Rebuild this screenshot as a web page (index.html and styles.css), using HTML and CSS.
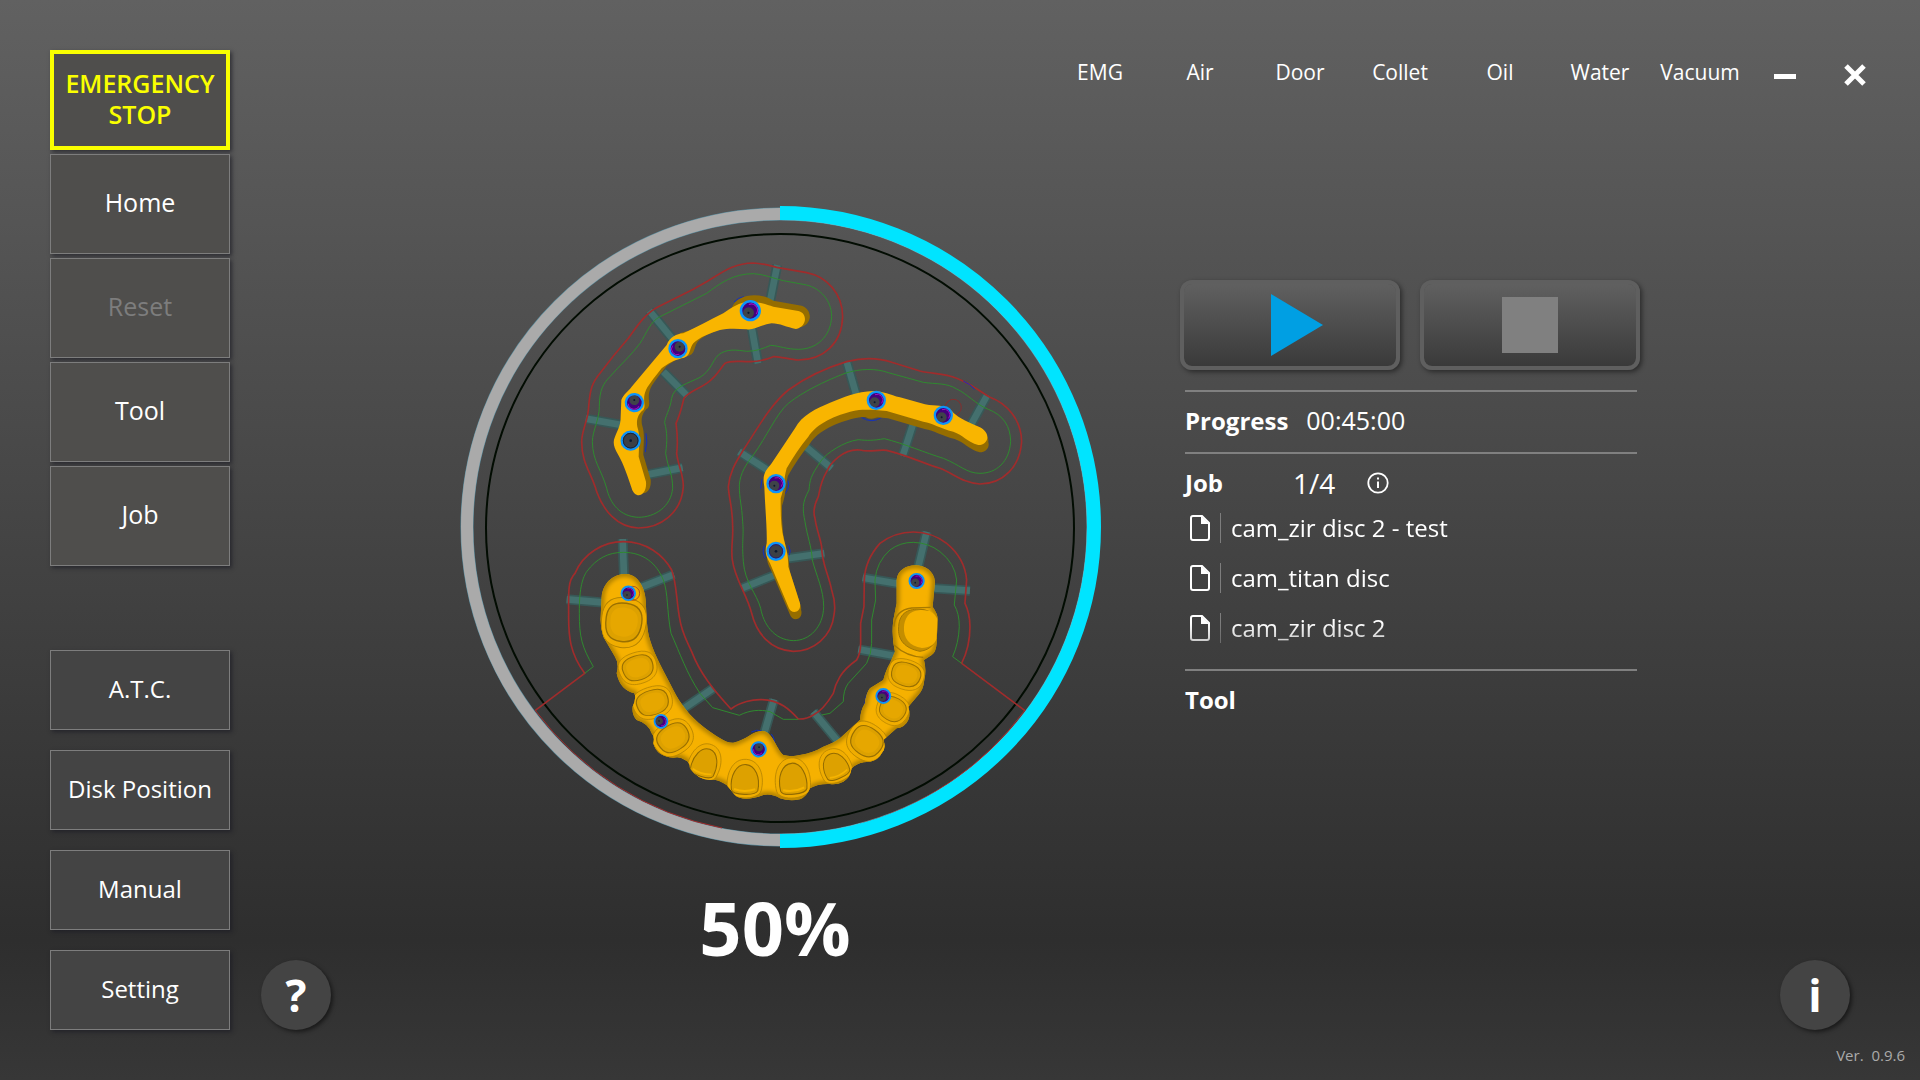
FILE: index.html
```html
<!DOCTYPE html>
<html lang="en">
<head>
<meta charset="utf-8">
<title>Milling Control</title>
<link rel="stylesheet" href="styles.css">
</head>
<body>
<div class="app">
  <nav class="sidebar" aria-label="Machine">
    <div class="group group-top">
      <button class="side-btn emergency" type="button">EMERGENCY STOP</button>
      <button class="side-btn" type="button">Home</button>
      <button class="side-btn" type="button" disabled>Reset</button>
      <button class="side-btn" type="button">Tool</button>
      <button class="side-btn" type="button">Job</button>
    </div>
    <div class="group group-bottom">
      <button class="side-btn" type="button">A.T.C.</button>
      <button class="side-btn" type="button">Disk Position</button>
      <button class="side-btn" type="button">Manual</button>
      <button class="side-btn" type="button">Setting</button>
    </div>
  </nav>

  <div class="main">
    <header class="topbar">
      <ul class="status">
        <li>EMG</li><li>Air</li><li>Door</li><li>Collet</li><li>Oil</li><li>Water</li><li>Vacuum</li>
      </ul>
      <button class="win-btn" type="button" aria-label="Minimize">
        <svg width="24" height="24" viewBox="0 0 24 24"><path d="M1 13.500H23" stroke="#fff" stroke-width="5"/></svg>
      </button>
      <button class="win-btn" type="button" aria-label="Close">
        <svg width="24" height="24" viewBox="0 0 24 24"><path d="M3 3L21 21M21 3L3 21" stroke="#fff" stroke-width="5"/></svg>
      </button>
    </header>

    <main class="content">
      <section class="disc">
        <svg class="disc-view" viewBox="459 206 642 642" role="img" aria-label="Disc preview">
          <defs>
            <g id="hole">
              <circle r="24" fill="#43007c"/>
              <path d="M-4 -17A17 17 0 0 1 16 9" fill="none" stroke="#a010c0" stroke-width="3"/>
              <circle cx="-5" cy="6" r="15" fill="#3f4349"/>
              <circle r="25.500" fill="none" stroke="#0c94fb" stroke-width="7"/>
              <circle cx="-5" cy="6" r="3" fill="#0d1a30"/>
            </g>
            <g id="tooth">
              <path d="M-50 -8C-50 -38 -32 -50 0 -50C34 -50 50 -34 50 -4C50 34 32 50 0 50C-34 50 -50 32 -50 -8Z" fill="#f0ad00" stroke="#b38300" stroke-width="2"/>
              <path d="M-40 -6C-40 -30 -26 -39 0 -39C28 -39 40 -26 40 -4C40 26 26 38 0 38C-28 38 -40 26 -40 -6Z" fill="#dda100" stroke="#9a7000" stroke-width="3"/>
              <path d="M-30 -6C-30 -24 -16 -30 0 -30C20 -30 31 -20 31 -4C31 19 18 28 0 28C-20 28 -30 18 -30 -6Z" fill="#e6a700"/>
            </g>
            <g id="incisor">
              <path d="M-46 28C-54 -10 -38 -50 0 -50C38 -50 54 -10 46 26C40 52 -38 54 -46 28Z" fill="#f0ad00" stroke="#b38300" stroke-width="2"/>
              <path d="M-35 28C-42 -6 -26 -37 0 -37C26 -37 42 -6 37 26C32 40 -30 42 -35 28Z" fill="#dda100" stroke="#936b00" stroke-width="3"/>
              <path d="M-28 26Q0 34 30 23" fill="none" stroke="#f6b400" stroke-width="5"/>
            </g>
            <path id="barA" d="M215 745C205 715 190 670 175 645C160 620 158 605 165 590C175 565 182 555 182 530L184 480C190 462 205 455 215 440L320 315C330 290 350 282 370 280C410 262 450 240 490 220C510 205 540 185 570 185C600 185 620 195 640 200L715 213C745 220 740 262 708 267C680 262 660 250 635 250C600 255 580 272 560 268C530 265 500 265 480 270C450 280 420 290 400 310C385 330 395 350 365 355C340 362 325 370 305 385C290 405 268 430 258 450C245 480 260 495 250 510C235 520 228 540 232 560C242 590 236 620 236 650L258 725C262 770 225 780 215 745Z"/>
            <path id="barB" d="M205 800L150 670C135 645 135 630 140 610C142 570 135 500 133 440C125 400 140 390 155 370L225 265C245 225 290 205 330 188C370 172 410 155 460 153C490 153 510 165 540 172L615 193C650 200 670 192 695 212C710 230 730 240 780 262C815 280 805 315 775 315C740 305 730 285 700 275C660 265 640 250 610 245L500 213C450 208 420 208 400 213C350 225 290 250 265 290C240 320 220 350 200 385C190 420 195 440 182 475C182 520 182 560 192 600C200 630 205 650 205 680L240 790C245 820 212 825 205 800Z"/>
            <path id="arch" d="M185 200C190 150 230 130 260 132C295 135 315 175 317 210C320 260 320 300 330 330C345 380 375 430 400 480C420 520 450 560 490 590C530 620 560 640 580 638C620 630 640 600 670 603C700 610 705 650 730 675Q755 682 780 675Q820 668 850 650Q880 640 900 625L960 570Q962 540 975 520Q978 490 990 475L1030 450Q1038 420 1050 400L1065 365Q1054 320 1060 270L1070 220V150C1075 90 1180 90 1185 155L1178 230Q1195 255 1193 270L1190 340Q1188 368 1175 375L1152 390Q1160 420 1153 450Q1150 480 1135 495L1105 530Q1112 555 1105 570Q1095 592 1070 595L1030 630Q1040 655 1025 670Q1015 690 990 695Q955 695 935 715Q930 745 910 755Q890 765 870 762Q835 760 810 775Q800 800 780 808Q750 815 720 805Q695 790 670 795Q610 818 585 795L560 765Q530 745 510 750Q475 750 450 715Q450 695 435 690Q420 678 400 683Q350 680 340 640Q345 620 335 610Q325 580 290 570Q275 555 278 530Q290 505 283 490Q240 480 230 430Q238 400 225 380L190 320Q180 290 182 260Z"/>
            <clipPath id="archClip"><use href="#arch"/></clipPath>
            <filter id="soft" x="-10%" y="-10%" width="120%" height="120%"><feGaussianBlur stdDeviation="6"/></filter>
          </defs>

          <circle class="ring-edge" cx="780" cy="527" r="313"/>
          <circle class="ring-rest" cx="780" cy="527" r="313"/>
          <circle class="disc-rim" cx="780" cy="528" r="294"/>
          <path class="limit" d="M535 710A306 306 0 0 0 722 828M860 824A306 306 0 0 0 1025 710"/>
          <path class="ring-done" d="M780 213A314 314 0 0 1 780 841"/>

          <g transform="translate(560 240) scale(.3333)">
            <path class="pin" d="M652 75L630 185M268 212L340 300M594 370L575 262M382 468L310 395M77 536L185 555M368 683L262 704"/>
            <path class="pin-core" d="M652 75L630 185M268 212L340 300M594 370L575 262M382 468L310 395M77 536L185 555M368 683L262 704"/>
            <path class="margin" d="M295 200L400 148L445 122C490 95 520 70 580 69C610 70 630 77 650 82L740 98C800 110 848 160 848 230C846 310 790 360 715 360C690 360 660 348 640 350C620 358 600 366 565 365C540 365 510 360 495 370C480 385 475 405 440 430C410 450 385 455 372 475C365 500 362 520 348 550C352 580 355 600 350 640C355 680 370 700 370 740C365 820 300 864 235 864C170 862 130 810 110 755C95 700 65 670 65 605C65 570 85 540 86 500C90 450 95 430 120 400C150 360 170 335 205 295C230 260 255 220 295 200Z"/>
            <path class="path" d="M300 230L440 160C480 130 520 101 580 101C610 102 640 115 670 122L740 135C780 145 815 180 815 230C812 290 770 328 715 328C680 328 660 318 632 316C610 325 590 334 560 334C530 330 500 325 475 345C455 365 455 390 420 412C385 430 340 440 335 475C330 510 315 530 314 548C322 580 322 600 317 640C325 690 338 700 338 745C333 800 285 832 235 832C180 830 150 790 140 745C125 690 98 665 97 605C98 570 118 540 118 500C118 450 130 430 150 410C180 375 215 345 240 310C260 280 270 245 300 230Z"/>
            <path class="trace" d="M522 186Q535 172 552 170M258 580Q264 605 256 636"/>
            <path class="bar-side" d="M515 205C530 160 600 155 640 182L725 197C760 210 755 250 720 262L600 240Z"/>
            <use class="bar-side" href="#barA" transform="translate(14 -6)"/>
            <use class="bar-top" href="#barA"/>
            <use href="#hole" transform="translate(571 212) scale(1.1)"/>
            <use href="#hole" transform="translate(354 326) rotate(180)"/>
            <use href="#hole" transform="translate(223 488) rotate(140)"/>
            <circle cx="212" cy="602" r="27" fill="#3c4046" stroke="#0c94fb" stroke-width="7"/>
            <circle cx="212" cy="602" r="22" fill="none" stroke="#14243f" stroke-width="3"/>
            <circle cx="212" cy="602" r="4" fill="#0d1a30"/>
          </g>

          <g transform="translate(720 340) scale(.3333)">
            <path class="pin" d="M380 65L410 168M802 165L750 260M548 348L580 250M335 385L255 318M57 335L150 395M313 640L205 655M65 745L165 705"/>
            <path class="pin-core" d="M380 65L410 168M802 165L750 260M548 348L580 250M335 385L255 318M57 335L150 395M313 640L205 655M65 745L165 705"/>
            <path class="margin" d="M25 440C28 400 45 370 70 330C110 270 150 195 205 150C260 110 330 80 380 65C430 52 480 55 515 67L600 93C640 103 670 98 710 115C760 135 780 155 810 172C860 190 905 240 905 305C900 380 850 432 780 432C730 430 700 400 660 385C610 370 560 345 500 331C470 328 450 338 420 330C370 325 330 370 320 395C300 430 300 450 295 470C280 500 280 520 285 535C290 570 300 590 305 620C305 670 325 700 335 750C345 780 345 810 342 825C335 890 280 934 220 934C150 930 110 880 95 820C80 760 45 720 37 660C32 620 40 600 38 560C38 500 27 480 25 440Z"/>
            <path class="path" d="M58 435C60 400 80 370 100 345C140 290 170 220 205 190C250 155 310 125 375 100C420 85 470 85 505 98L610 127C650 133 680 128 710 147C740 160 770 195 805 208C850 225 872 260 872 305C868 365 830 400 780 400C740 400 720 375 670 355C620 340 550 310 493 296C460 302 440 302 415 299C370 305 320 340 305 360C270 410 270 420 267 450C245 490 248 510 255 545C262 590 275 620 277 660C290 710 311 750 311 800C310 860 270 902 220 902C160 900 130 850 122 805C110 760 75 730 70 665C65 600 72 590 68 545C65 490 58 480 58 435Z"/>
            <path class="trace" d="M424 232Q455 252 486 232M204 422Q212 445 190 466M126 418L122 446M132 618Q126 634 134 654M206 616Q214 634 208 646M730 123Q750 132 764 148"/>
            <circle class="trace-red" cx="700" cy="202" r="24"/>
            <path class="bar-side" d="M420 215Q450 255 490 220Z"/>
            <use class="bar-side" href="#barB" transform="translate(4 22)"/>
            <use class="bar-side" href="#barB" transform="translate(3 10)"/>
            <use class="bar-top" href="#barB"/>
            <use href="#hole" transform="translate(469 181)"/>
            <use href="#hole" transform="translate(670 226)"/>
            <use href="#hole" transform="translate(168 431)"/>
            <circle cx="168" cy="634" r="25" fill="#3c4046" stroke="#0c94fb" stroke-width="8"/>
            <circle cx="168" cy="634" r="20" fill="none" stroke="#2a1c70" stroke-width="3"/>
            <circle cx="168" cy="634" r="4" fill="#0d1a30"/>
          </g>

          <g transform="translate(540 530) scale(.3333)">
            <path class="pin" d="M248 27L252 140M80 208L195 218M402 133L295 175M520 475L425 540M702 508L670 620M1160 5L1135 110M968 143L1080 162M1290 182L1180 175M955 358L1065 378M820 545L892 632"/>
            <path class="pin-core" d="M248 27L252 140M80 208L195 218M402 133L295 175M520 475L425 540M702 508L670 620M1160 5L1135 110M968 143L1080 162M1290 182L1180 175M955 358L1065 378M820 545L892 632"/>
            <path class="margin" d="M-14 541L134 430C90 370 85 320 86 250C85 180 85 150 105 130C130 70 190 35 250 35C320 35 370 75 395 120C410 160 408 200 418 260C425 310 440 330 455 365C480 430 520 480 573 537C600 515 640 508 665 509C720 510 750 540 775 567Q800 568 820 555Q850 540 880 490Q885 465 900 440Q915 415 950 390Q962 370 962 340V280L972 230L973 150Q975 90 1020 40Q1065 6 1120 6Q1175 6 1220 40Q1275 85 1280 150L1275 220Q1290 250 1290 290Q1290 350 1265 400L1455 542"/>
            <path class="path" d="M134 430L160 410C125 350 118 320 118 250C117 170 130 140 140 125C170 85 205 67 250 67C310 67 350 100 370 150C385 190 380 240 393 310C420 370 440 430 480 490L518 533L598 556C630 540 660 538 690 545L730 568H775M845 555L870 550L910 515Q910 480 925 460L980 400Q995 370 995 340V270L1007 210L1005 150Q1010 95 1050 60Q1080 37 1120 37Q1165 38 1200 65Q1245 100 1250 150L1243 225Q1258 250 1258 290Q1256 340 1238 380L1265 400"/>
            <path class="trace" d="M634 606Q650 598 664 602M694 612Q706 626 704 650M990 478Q976 496 974 524"/>
            <use href="#arch" fill="#f6b100"/>
            <g clip-path="url(#archClip)">
              <use href="#arch" fill="none" stroke="#ac7e00" stroke-width="17" filter="url(#soft)"/>
              <use href="#tooth" transform="translate(251 278) rotate(8) scale(1.35 1.5)"/>
              <use href="#tooth" transform="translate(294 414) rotate(-18) scale(1.15 .95)"/>
              <use href="#tooth" transform="translate(338 518) rotate(-18) scale(1.2 .95)"/>
              <use href="#tooth" transform="translate(400 624) rotate(-32) scale(1.22 1.02)"/>
              <use href="#incisor" transform="translate(495 698) rotate(20) scale(1 1.15)"/>
              <use href="#incisor" transform="translate(615 748) rotate(4) scale(1.1 1.2)"/>
              <use href="#incisor" transform="translate(758 746) rotate(-4) scale(1.1 1.25)"/>
              <use href="#incisor" transform="translate(885 708) rotate(-22) scale(1 1.05)"/>
              <use href="#tooth" transform="translate(980 635) rotate(35) scale(1.2 1.1)"/>
              <use href="#tooth" transform="translate(1058 538) rotate(30) scale(.98 .92)"/>
              <use href="#tooth" transform="translate(1098 434) rotate(18) scale(1.1 .9)"/>
              <path d="M1062 290Q1065 240 1115 234L1172 232M1062 345Q1100 380 1150 382" fill="none" stroke="#a87a00" stroke-width="4"/>
              <path d="M1076 290C1078 245 1110 236 1140 238C1175 238 1193 262 1192 290C1194 335 1175 360 1140 364C1095 355 1072 330 1076 290Z" fill="#c48e00" stroke="#a37700" stroke-width="3"/>
              <path d="M1092 290C1096 250 1120 240 1146 240L1170 243Q1190 255 1192 270L1190 325C1186 345 1166 354 1146 354C1108 347 1090 325 1092 290Z" fill="#f6b200"/>
            </g>
            <circle class="trace-red" cx="278" cy="190" r="21"/>
            <use href="#hole" transform="translate(265 190) scale(.8)"/>
            <use href="#hole" transform="translate(363 574) rotate(60) scale(.76)"/>
            <use href="#hole" transform="translate(656 658) rotate(150) scale(.84)"/>
            <use href="#hole" transform="translate(1130 153) scale(.84)"/>
            <use href="#hole" transform="translate(1030 498) scale(.82)"/>
          </g>
        </svg>
        <p class="percent">50%</p>
      </section>

      <section class="panel">
        <div class="controls">
          <button class="ctl" type="button" aria-label="Start">
            <svg width="66" height="62" viewBox="-14 0 66 62"><path d="M0 0L52 31L0 62Z" fill="#009fe3"/></svg>
          </button>
          <button class="ctl" type="button" aria-label="Stop">
            <svg width="56" height="56" viewBox="0 0 56 56"><path d="M0 0H56V56H0Z" fill="#808080"/></svg>
          </button>
        </div>
        <div class="info">
          <div class="row">
            <h2>Progress</h2><span class="time">00:45:00</span>
          </div>
          <div class="jobs">
            <div class="job-head">
              <h2>Job</h2><span class="count">1/4</span>
              <button class="detail" type="button" aria-label="Job details">
                <svg width="22" height="22" viewBox="0 0 22 22"><circle cx="11" cy="11" r="9.700" fill="none" stroke="#fff" stroke-width="1.800"/><path d="M11 9.500V16M11 5.500V7.600" stroke="#fff" stroke-width="2"/></svg>
              </button>
            </div>
            <ul class="files">
              <li><svg class="file" width="20" height="26" viewBox="0 0 20 26"><path d="M3 1H12L19 8V23Q19 25 17 25H3Q1 25 1 23V3Q1 1 3 1Z" fill="none" stroke="#fff" stroke-width="2"/><path d="M11 1V9H19Z" fill="#fff"/></svg><span>cam_zir disc 2 - test</span></li>
              <li><svg class="file" width="20" height="26" viewBox="0 0 20 26"><path d="M3 1H12L19 8V23Q19 25 17 25H3Q1 25 1 23V3Q1 1 3 1Z" fill="none" stroke="#fff" stroke-width="2"/><path d="M11 1V9H19Z" fill="#fff"/></svg><span>cam_titan disc</span></li>
              <li><svg class="file" width="20" height="26" viewBox="0 0 20 26"><path d="M3 1H12L19 8V23Q19 25 17 25H3Q1 25 1 23V3Q1 1 3 1Z" fill="none" stroke="#fff" stroke-width="2"/><path d="M11 1V9H19Z" fill="#fff"/></svg><span>cam_zir disc 2</span></li>
            </ul>
          </div>
          <div class="row"><h2>Tool</h2></div>
        </div>
      </section>
    </main>

    <footer class="footer">
      <button class="round" type="button">?</button>
      <button class="round" type="button">i</button>
    </footer>
    <p class="version">Ver.&nbsp; 0.9.6</p>
  </div>
</div>
</body>
</html>
```
FILE: styles.css
```css
* { box-sizing: border-box; }

body {
  margin: 0;
  color: #fff;
  font-family: "Open Sans", "Noto Sans", sans-serif;
  font-size: 24px;
  background: linear-gradient(#616161 0%, #2e2e2e 87%, #373737 100%) no-repeat;
}

h2, p, ul { margin: 0; padding: 0; }
ul { list-style: none; }
svg { display: block; }

button {
  margin: 0;
  padding: 0;
  border: 0;
  background: none;
  color: inherit;
  font: inherit;
}

.app {
  display: grid;
  grid-template-columns: 180px 1fr;
  min-height: 100vh;
  padding-left: 50px;
}

/* Sidebar */
.sidebar {
  display: flex;
  flex-direction: column;
  justify-content: space-between;
  padding: 50px 0;
}

.group { display: grid; }
.group-top { gap: 4px; grid-auto-rows: 100px; }
.group-bottom { gap: 20px; grid-auto-rows: 80px; }

.side-btn {
  padding-bottom: 3px;
  border: 1px solid #7d7d7d;
  background: #4f4e4c;
  box-shadow: 2px 2px 4px #1c1c24b0;
  font-size: 25px;
  line-height: 31px;
}

.group-bottom .side-btn { background: #444; font-size: 24px; }
.side-btn:disabled { color: #7d7d7d; }

.side-btn.emergency {
  border: 4px solid #faff00;
  color: #faff00;
  font-weight: 600;
}

/* Top bar */
.main {
  display: flex;
  flex-direction: column;
}

.topbar {
  display: flex;
  justify-content: flex-end;
  height: 150px;
  padding: 50px 30px 0 0;
}

.status {
  display: grid;
  grid-template-columns: repeat(7, 100px);
  font-size: 21px;
  line-height: 45px;
  text-align: center;
}

.win-btn {
  display: grid;
  place-items: center;
  width: 70px;
  height: 50px;
}

/* Disc and job panel */
.content {
  display: grid;
  grid-template-columns: 229fr 642fr 79fr 460fr 280fr;
  padding-top: 56px;
}

.disc { grid-column: 2; }
.disc-view { width: 100%; }

.percent {
  padding: 48px 10px 0 0;
  font-size: 74px;
  font-weight: 700;
  line-height: 64px;
  text-align: center;
}

.ring-edge { fill: none; stroke: #5a8ea0; stroke-width: 13; }
.ring-rest { fill: none; stroke: #aaa; stroke-width: 12; }
.ring-done { fill: none; stroke: #00e4ff; stroke-width: 14; }
.disc-rim { fill: none; stroke: #020c02; stroke-width: 2; }
.limit { fill: none; stroke: #a22c2c; stroke-width: 1; }
.margin { fill: none; stroke: #a02c2c; stroke-width: 5; }
.path { fill: none; stroke: #2f8a2f; stroke-width: 3; }
.trace { fill: none; stroke: #1230c0; stroke-width: 3; }
.trace-red { fill: none; stroke: #a02020; stroke-width: 2; }
.pin { fill: none; stroke: #375857; stroke-width: 30; }
.pin-core { fill: none; stroke: #44706e; stroke-width: 20; }
.bar-side { fill: #956d00; }
.bar-top { fill: #f9b500; }

.panel {
  grid-column: 4;
  padding-top: 74px;
}

.controls {
  display: grid;
  grid-template-columns: 1fr 1fr;
  gap: 20px;
  margin-bottom: 20px;
}

.ctl {
  display: grid;
  place-items: center;
  height: 90px;
  border: 4px solid #5f5f5f;
  border-radius: 12px;
  background: linear-gradient(#606060, #3a3a3a) padding-box;
  box-shadow: 2px 2px 5px #0007;
}

.info { margin: 0 3px 0 5px; }

.row, .jobs { border-top: 2px solid #808080; }

.row {
  display: flex;
  align-items: center;
  gap: 18px;
  height: 62px;
  padding-bottom: 4px;
}

.time { font-size: 25px; }

h2 {
  font-size: 24px;
  font-weight: 700;
}

.jobs { padding-bottom: 16px; }

.job-head {
  display: grid;
  grid-template-columns: 108px 74px 22px;
  align-items: center;
  height: 49px;
  padding-top: 8px;
}

.count {
  font-size: 28px;
  line-height: 36px;
}

.files {
  mask-image: linear-gradient(#000 80%, transparent 125%);
}

.files li {
  display: flex;
  align-items: center;
  height: 50px;
  padding-left: 5px;
}

.files span {
  margin-left: 10px;
  padding-left: 10px;
  border-left: 1px solid #7d7d7d;
  line-height: 30px;
}

/* Footer */
.footer {
  display: flex;
  justify-content: space-between;
  margin-top: auto;
  padding: 0 70px 0 31px;
}

.round {
  width: 70px;
  height: 70px;
  border-radius: 50%;
  background: #444;
  box-shadow: 2px 2px 4px #0008;
  font-size: 44px;
  font-weight: 700;
  line-height: 70px;
}

.version {
  height: 50px;
  padding-right: 15px;
  color: #aaa;
  font-size: 15px;
  line-height: 50px;
  text-align: right;
}
```
